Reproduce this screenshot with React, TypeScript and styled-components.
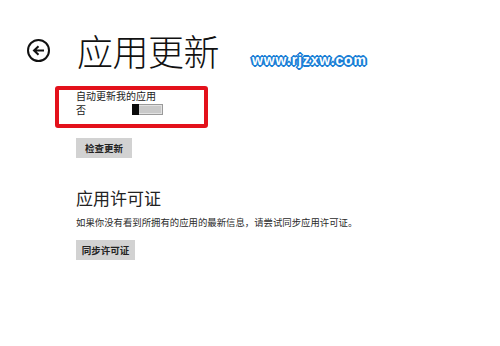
import styled, { createGlobalStyle } from 'styled-components'

const GlobalStyle = createGlobalStyle`
  html, body {
    margin: 0;
    padding: 0;
    background: #fff;
  }
  body {
    font-family: "Noto Sans CJK SC", "Noto Sans", sans-serif;
    color: #1a1a1a;
  }
`

const Page = styled.div`
  position: relative;
  width: 500px;
  height: 346px;
  overflow: hidden;
  background: #fff;
`

const Header = styled.header`
  display: flex;
  align-items: center;
  height: 44px;
  margin-top: 28px;
  padding-left: 27px;
  gap: 27px;
`

const BackButton = styled.button`
  width: 23px;
  height: 23px;
  padding: 0;
  border: 2px solid #111;
  border-radius: 50%;
  background: transparent;
  display: flex;
  align-items: center;
  justify-content: center;
  box-sizing: border-box;
`

const Title = styled.h1`
  margin: 0;
  font-size: 36px;
  line-height: 44px;
  font-weight: 300;
  color: #111;
  letter-spacing: -0.5px;
`

const Content = styled.main`
  padding-left: 55px;
`

const SettingBox = styled.section`
  box-sizing: border-box;
  width: 153px;
  height: 42px;
  margin-top: 14px;
  padding: 0 0 0 17px;
  border: 4px solid #e3111b;
  border-radius: 3px;
`

const SettingLabel = styled.div`
  font-size: 10px;
  line-height: 11px;
  color: #222;
`

const ToggleRow = styled.div`
  display: flex;
  align-items: center;
  height: 13px;
  margin-top: 2px;
`

const ToggleState = styled.span`
  width: 56px;
  font-size: 10px;
  line-height: 12px;
  color: #222;
`

const Track = styled.div`
  box-sizing: border-box;
  width: 31px;
  height: 11px;
  display: flex;
  border: 1px solid #9a9a9a;
  background: #c9c9c9;
  box-shadow: inset 0 0 0 1px #e2e2e2;
`

const Thumb = styled.div`
  width: 7px;
  height: 11px;
  margin: -1px 0 -1px -1px;
  background: #0a0a0a;
`

const ActionButton = styled.button<{ $top: number; $width: number }>`
  display: block;
  width: ${p => p.$width}px;
  height: 20px;
  margin: ${p => p.$top}px 0 0 21px;
  padding: 0;
  border: none;
  background: #d2d2d2;
  font-family: "Noto Sans CJK SC", sans-serif;
  font-size: 9.5px;
  font-weight: 700;
  color: #222;
`

const SectionTitle = styled.h2`
  margin: 29px 0 0 21px;
  font-size: 17px;
  line-height: 22px;
  font-weight: 400;
  color: #222;
`

const Description = styled.p`
  margin: 7px 0 0 21px;
  font-size: 9.4px;
  line-height: 12px;
  color: #2a2a2a;
`

const Watermark = styled.div`
  position: absolute;
  left: 252px;
  top: 52px;
  font-family: "Liberation Sans", Arial, sans-serif;
  font-size: 14px;
  font-weight: 700;
  letter-spacing: 0.9px;
  color: #fff;
  text-shadow:
    1px 0 0 #1b7fd6, -1px 0 0 #1b7fd6, 0 1px 0 #1b7fd6, 0 -1px 0 #1b7fd6,
    1px 1px 0 #1b7fd6, -1px -1px 0 #1b7fd6, 1px -1px 0 #1b7fd6, -1px 1px 0 #1b7fd6,
    2px 0 0 #1b7fd6, -2px 0 0 #1b7fd6, 0 2px 0 #1b7fd6, 0 -2px 0 #1b7fd6;
`

export default function App() {
  return (
    <Page>
      <GlobalStyle />
      <Header>
        <BackButton aria-label="返回">
          <svg width="13" height="11" viewBox="0 0 13 11">
            <path d="M12 5.5H2.5M6.5 1.2L2 5.5l4.5 4.3" fill="none" stroke="#111" strokeWidth="2" />
          </svg>
        </BackButton>
        <Title>应用更新</Title>
      </Header>

      <Content>
        <SettingBox>
          <SettingLabel>自动更新我的应用</SettingLabel>
          <ToggleRow>
            <ToggleState>否</ToggleState>
            <Track>
              <Thumb />
            </Track>
          </ToggleRow>
        </SettingBox>

        <ActionButton $top={10} $width={56}>检查更新</ActionButton>

        <SectionTitle>应用许可证</SectionTitle>
        <Description>如果你没有看到所拥有的应用的最新信息，请尝试同步应用许可证。</Description>
        <ActionButton $top={12} $width={59}>同步许可证</ActionButton>
      </Content>

      <Watermark>www.rjzxw.com</Watermark>
    </Page>
  )
}
